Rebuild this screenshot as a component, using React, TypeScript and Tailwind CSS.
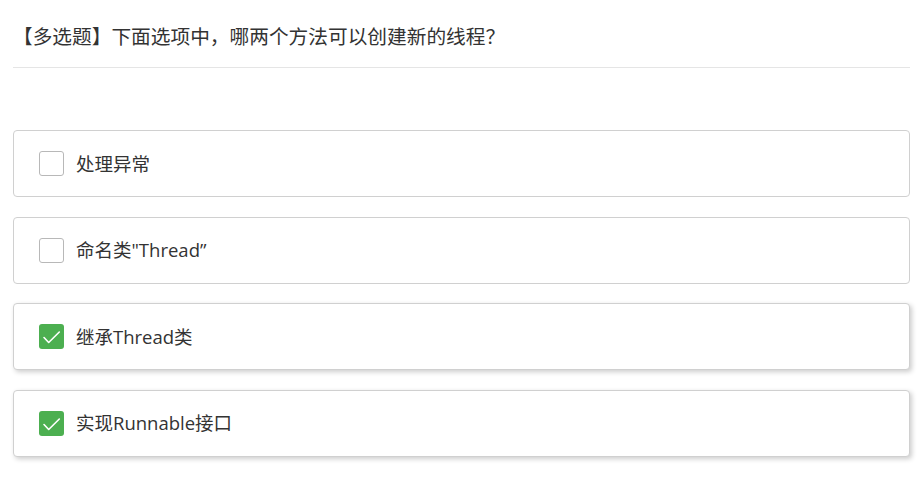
const options = [
  { label: '处理异常', checked: false },
  { label: '命名类"Thread”', checked: false },
  { label: '继承Thread类', checked: true },
  { label: '实现Runnable接口', checked: true },
];

const Checkbox = ({ checked }: { checked: boolean }) =>
  checked ? (
    <span className="flex h-[25px] w-[25px] shrink-0 items-center justify-center rounded-[3px] bg-[#4caf50]">
      <svg width="25" height="25" viewBox="0 0 25 25" fill="none">
        <path d="M5 13.5 L9.7 18.5 L20.3 8" stroke="white" strokeWidth="1.6" strokeLinecap="round" strokeLinejoin="round" />
      </svg>
    </span>
  ) : (
    <span className="h-[25px] w-[25px] shrink-0 rounded-[3px] border border-[#b8b8b8] bg-white" />
  );

export default function App() {
  return (
    <div
      className="min-h-screen bg-white px-[13px] text-[#333]"
      style={{ fontFamily: '"Open Sans", "Noto Sans CJK SC", sans-serif' }}
    >
      <div className="h-[68px] border-b border-[#e5e5e5] pt-[22px] text-[19.7px] leading-[30px]">
        【多选题】下面选项中，哪两个方法可以创建新的线程？
      </div>

      <div className="mt-[62px] flex flex-col gap-[19.5px]">
        {options.map((o) => (
          <div
            key={o.label}
            className={
              o.checked
                ? 'flex h-[67px] items-center gap-[12px] rounded-[4px] border border-[#d0d0d0] bg-white pl-[25px] shadow-[2px_2px_5px_rgba(0,0,0,0.2)]'
                : 'flex h-[67px] items-center gap-[12px] rounded-[4px] border border-[#d0d0d0] bg-white pl-[25px]'
            }
          >
            <Checkbox checked={o.checked} />
            <span className="text-[18.5px] leading-[26px]">{o.label}</span>
          </div>
        ))}
      </div>
    </div>
  );
}
